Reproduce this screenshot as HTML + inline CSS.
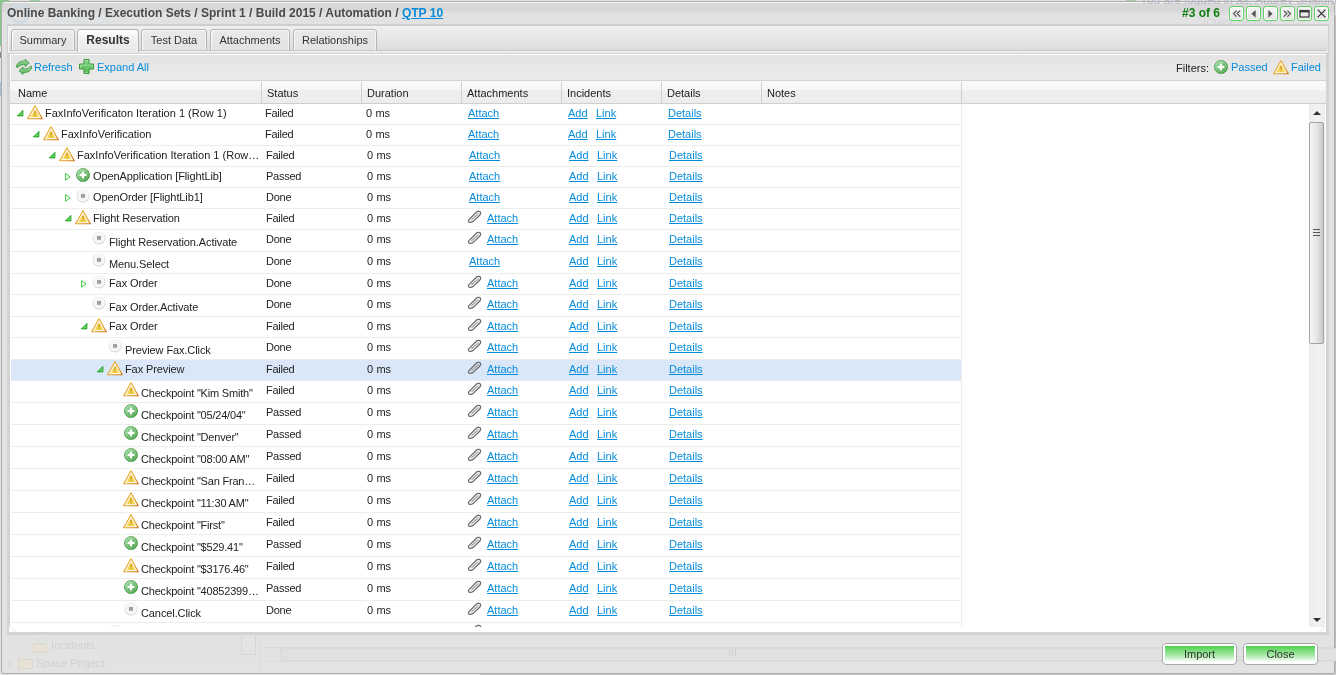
<!DOCTYPE html>
<html><head><meta charset="utf-8">
<style>
*{margin:0;padding:0;box-sizing:border-box}
html,body{width:1336px;height:675px;overflow:hidden;background:#e4e4e4;font-family:"Liberation Sans",sans-serif;font-size:11px;color:#222}
.a{position:absolute}
.ic{display:block}
.t{position:absolute;white-space:nowrap;line-height:13px;font-size:11px;color:#222}
.lk{color:#068cdc;text-decoration:underline}
#dlg{position:absolute;left:1px;top:1px;width:1334px;height:673px;border:1px solid #adadad;border-radius:4px 4px 2px 2px;background:linear-gradient(#f4f4f4 0,#f4f4f4 1px,#d8d8d8 1px,#d7d7d7 8px,#e2e2e2 12px,#e3e3e3 100%)}
#title{position:absolute;left:7px;top:6px;font-weight:bold;font-size:12px;color:#4b4b4b;line-height:14px;white-space:nowrap}
#title u{color:#068cdc}
#nav{position:absolute;left:1182px;top:6px;font-weight:bold;font-size:12px;color:#118011;line-height:14px}
.nb{position:absolute;top:6px;width:15px;height:15px;border:1px solid #5fd35f;border-radius:3px;background:linear-gradient(#f6f6f6,#e2e2e2);box-shadow:inset 0 0 0 1px #fff}
.nb svg{position:absolute;left:0;top:0}
#op{position:absolute;left:7px;top:24px;width:1322px;height:611px;border:1px solid #cfcfcf;border-top:2px solid #cecece;background:linear-gradient(#f0f0f0 0,#dcdcdc 24px,#ececec 25px);box-shadow:inset 1px 0 0 #f7f7f7}
.tab{position:absolute;top:29px;height:22px;border:1px solid #b3b3b3;border-radius:3px 3px 0 0;background:linear-gradient(#e9e9e9,#e3e3e3);box-shadow:inset 1px 1px 0 #fbfbfb,inset -1px 0 0 #f4f4f4;line-height:20px;text-align:center;font-size:11px;color:#333}
.tab span{position:relative;top:0px}
.tab.act{background:linear-gradient(#ffffff,#eeeeee 45%,#e9e9e9);height:23px;border-bottom:none;font-weight:bold;font-size:12px;color:#333;z-index:2}
#tline{position:absolute;left:9px;top:50px;width:1317px;height:1px;background:#c9c9c9}
#ip{position:absolute;left:7px;top:53px;width:1322px;height:582px;border-left:3px solid #d3d3d3;border-right:3px solid #d3d3d3;border-bottom:3px solid #d3d3d3;border-top:1px solid #d0d0d0;background:#fff}
#tbar{position:absolute;left:10px;top:54px;width:1316px;height:27px;background:linear-gradient(#e3e3e3,#ebebeb);border-bottom:1px solid #d2d2d2;border-top:1px solid #ffffff;border-left:1px solid #fff}
#hdr{position:absolute;left:10px;top:81px;width:1316px;height:23px;background:linear-gradient(#f9f9f9 0,#f7f7f7 40%,#eeeff1 40%,#ebecee 100%);border-bottom:1px solid #cfcfcf}
.hs{position:absolute;top:82px;width:1px;height:21px;background:#cfcfcf}
.row{position:absolute;left:11px;width:950px;border-bottom:1px solid #ededed;box-sizing:content-box}
.row.sel{background:#d9e7f8}
#sb{position:absolute;left:1309px;top:104px;width:17px;height:523px;background:linear-gradient(90deg,#ececec,#f2f2f2 60%,#eeeeee);border-right:1px solid #fff}
.btn{position:absolute;top:643px;height:22px;border:1px solid #a9a9a9;border-radius:4px;background:#fff;padding:2px}
.btn div{width:100%;height:100%;background:linear-gradient(#4cd24c,#b5ecb5 65%,#ffffff);text-align:center;line-height:17px;font-size:11px;color:#333}
#root{position:absolute;left:0;top:0;width:1336px;height:675px;will-change:transform}
</style></head><body><div id="root">
<div class="a" style="left:0;top:0;width:2px;height:46px;background:#86c886"></div><div class="a" style="left:0;top:0;width:9px;height:2px;background:#86c886"></div><div class="a" style="left:30px;top:0;width:10px;height:1px;background:#9ad09a"></div><div class="a" style="left:0;top:52px;width:1px;height:6px;background:#888"></div><div class="a" style="left:0;top:82px;width:1px;height:14px;background:#a8c0d8"></div><div class="a" style="left:1126px;top:0;width:10px;height:2px;background:#a6d3a6"></div>
<svg width="0" height="0" style="position:absolute">
<defs>
<linearGradient id="gp" x1="0.2" y1="0.1" x2="0.8" y2="0.9"><stop offset="0" stop-color="#9ad89a"/><stop offset="1" stop-color="#3d9a3d"/></linearGradient>
<linearGradient id="gw" x1="0" y1="0" x2="1" y2="1"><stop offset="0" stop-color="#f0b53a"/><stop offset="0.6" stop-color="#e5a12a"/><stop offset="1" stop-color="#cf7410"/></linearGradient>
<symbol id="warn" viewBox="0 0 16 15"><path d="M8 0.7 L15.3 13.7 H0.7 Z" fill="#fffdf6" stroke="url(#gw)" stroke-width="1.15" stroke-linejoin="round"/><path d="M8 4.3 L12.4 12.1 H3.6Z" fill="#f5d24a"/><path d="M8 4.3 L12.4 12.1 H3.6Z" fill="none" stroke="#f9e59a" stroke-width="0.5"/><rect x="7.35" y="5.8" width="1.3" height="3.6" rx="0.5" fill="#cf9a2c"/><rect x="7.35" y="10.2" width="1.3" height="1.1" fill="#cf9a2c"/></symbol>
<symbol id="pass" viewBox="0 0 14 14"><circle cx="7" cy="7" r="6.6" fill="url(#gp)"/><circle cx="7" cy="7" r="6.6" fill="none" stroke="#4b9e4b" stroke-width="0.7"/><circle cx="7" cy="7" r="5.1" fill="none" stroke="#c4e8c4" stroke-width="0.6" opacity="0.8"/><path d="M5.8 3.5h2.4v2.3h2.3v2.4H8.2v2.3H5.8V8.2H3.5V5.8h2.3z" fill="#fff"/></symbol>
<symbol id="done" viewBox="0 0 14 14"><defs><linearGradient id="gd" x1="0" y1="0" x2="0" y2="1"><stop offset="0" stop-color="#f0f0f0"/><stop offset="1" stop-color="#c9c9c9"/></linearGradient></defs><circle cx="7" cy="7" r="6.5" fill="url(#gd)"/><circle cx="7" cy="7" r="5.6" fill="#fdfdfd"/><circle cx="7" cy="7" r="4.4" fill="#f3f3f3"/><rect x="5" y="5" width="4" height="3.8" fill="#a0a0a0"/></symbol>
<symbol id="exp" viewBox="0 0 7 7"><path d="M5.9 0.4 V5.9 H0.4 Z" fill="#5bd65b" stroke="#1f9b1f" stroke-width="0.9" stroke-linejoin="round"/></symbol>
<symbol id="col" viewBox="0 0 7 8"><path d="M0.6 0.6 V7.2 L5.1 3.9 Z" fill="#fff" stroke="#3ac83a" stroke-width="1" stroke-linejoin="round"/></symbol>
<symbol id="clip" viewBox="0 0 15 14"><path d="M3.2 12.4 C1.6 12.4 0.9 10.8 2 9.6 L9.6 2 C10.8 0.9 13.2 1.5 13.6 2.6 C14 3.8 13.2 4.6 12.6 5.2 L6 11.6 C5.2 12.3 4.2 12.4 3.2 12.4Z" fill="none" stroke="#6a6a6a" stroke-width="1.3"/><path d="M4.4 10 L11.6 3.4" stroke="#9a9a9a" stroke-width="1.1"/></symbol>
</defs></svg>

<div class="a" style="left:1335px;top:14px;width:1px;height:661px;background:#bcbcbc"></div><div class="a" style="left:480px;top:674px;width:856px;height:1px;background:#c4c4c4"></div>
<div id="dlg"></div>
<div class="a" style="left:1100px;top:0;width:236px;height:5px;overflow:hidden"><div class="t" style="left:40px;top:-6px;font-size:12px;line-height:12px;color:#bdb7c6">You are logged in as: Audrey Shalom</div></div>
<svg class="a" style="left:0;top:0" width="160" height="26" viewBox="0 0 160 26"><circle cx="19.5" cy="14" r="8.5" fill="none" stroke="#d3dce2" stroke-width="3.5"/><circle cx="29" cy="14" r="10" fill="none" stroke="#d9e0d9" stroke-width="2" stroke-dasharray="20 40" transform="rotate(-60 29 14)"/><text x="45" y="23" font-family="Liberation Sans" font-size="18" fill="#d9e0e4">nterprise</text></svg>
<div class="a" style="left:1204px;top:14px;width:132px;height:11px;border-left:1px solid #d9d9d9;border-top:1px solid #dcdcdc"></div>
<div class="t" style="left:1206px;top:16px;color:#d4d4d8;font-size:11px">Quick Search</div>
<div id="title">Online Banking / Execution Sets / Sprint 1 / Build 2015 / Automation / <u>QTP 10</u></div>
<div id="nav">#3 of 6</div>
<div class="nb" style="left:1229px"><svg width="13" height="13" viewBox="0 0 13 13"><path d="M6.6 3.6 L3.6 6.6 L6.6 9.6 M10.2 3.6 L7.2 6.6 L10.2 9.6" fill="none" stroke="#555" stroke-width="1.3"/></svg></div>
<div class="nb" style="left:1246px"><svg width="13" height="13" viewBox="0 0 13 13"><path d="M8.6 3 V10.4 L4.4 6.7Z" fill="#505050"/></svg></div>
<div class="nb" style="left:1263px"><svg width="13" height="13" viewBox="0 0 13 13"><path d="M4.4 3 V10.4 L8.6 6.7Z" fill="#505050"/></svg></div>
<div class="nb" style="left:1280px"><svg width="13" height="13" viewBox="0 0 13 13"><path d="M2.8 3.6 L5.8 6.6 L2.8 9.6 M6.4 3.6 L9.4 6.6 L6.4 9.6" fill="none" stroke="#555" stroke-width="1.3"/></svg></div>
<div class="nb" style="left:1297px"><svg width="13" height="13" viewBox="0 0 13 13"><rect x="2" y="3.5" width="9" height="6.5" fill="none" stroke="#3a3a3a" stroke-width="1.2"/><rect x="1.5" y="3" width="10" height="2.4" fill="#3a3a3a"/></svg></div>
<div class="nb" style="left:1314px"><svg width="13" height="13" viewBox="0 0 13 13"><path d="M2.6 2.6 L10.4 10.4 M10.4 2.6 L2.6 10.4" stroke="#333" stroke-width="1.3"/></svg></div>
<div id="op"></div>
<div class="tab" style="left:11px;width:64px"><span>Summary</span></div>
<div class="tab act" style="left:77px;width:62px"><span>Results</span></div>
<div class="tab" style="left:141px;width:66px"><span>Test Data</span></div>
<div class="tab" style="left:210px;width:80px"><span>Attachments</span></div>
<div class="tab" style="left:293px;width:84px"><span>Relationships</span></div>
<div id="tline"></div>

<div id="ip"></div>
<div id="tbar"></div>
<div class="a" style="left:16px;top:59px"><svg width="16" height="16" viewBox="0 0 16 16"><defs><linearGradient id="gr" x1="0" y1="0" x2="0" y2="1"><stop offset="0" stop-color="#a4dba4"/><stop offset="1" stop-color="#57b457"/></linearGradient></defs><path d="M0.3 8 C0.8 4 4 1.9 9.2 1.9 L9.2 0.2 L13.2 3.9 L9.2 7.6 L9.2 5.6 C5.5 5.6 3 6.5 1.8 8.6 Z" fill="url(#gr)" stroke="#3b8f3b" stroke-width="0.8" stroke-linejoin="round"/><path d="M15.9 7.6 C15.4 11.6 12.2 13.7 7 13.7 L7 15.4 L3 11.7 L7 8 L7 10 C10.7 10 13.2 9.1 14.4 7 Z" fill="url(#gr)" stroke="#3b8f3b" stroke-width="0.8" stroke-linejoin="round"/></svg></div>
<div class="t lk" style="left:34px;top:61px;text-decoration:none">Refresh</div>
<div class="a" style="left:79px;top:59px"><svg width="15" height="15" viewBox="0 0 15 15"><defs><linearGradient id="gpl" x1="0" y1="0" x2="0" y2="1"><stop offset="0" stop-color="#8ad88a"/><stop offset="1" stop-color="#4eb64e"/></linearGradient></defs><path d="M5 0.5 H10 V5 H14.5 V10 H10 V14.5 H5 V10 H0.5 V5 H5Z" fill="url(#gpl)" stroke="#3c963c" stroke-width="1"/><path d="M6.2 1.6 H8.8 M1.6 6.2 V8.8 M13.4 6.2 V8.8 M6.2 13.4 H8.8" stroke="#b8ecb8" stroke-width="0.8"/><path d="M2 6.1 H13" stroke="#c8f0c8" stroke-width="0.7" opacity="0.7"/><path d="M7.5 2 V13" stroke="#6cc86c" stroke-width="0.8" opacity="0.5"/></svg></div>
<div class="t lk" style="left:97px;top:61px;text-decoration:none">Expand All</div>
<div class="t" style="left:1176px;top:62px">Filters:</div>
<div class="a" style="left:1214px;top:60px"><svg width="14" height="14" viewBox="0 0 14 14"><use href="#pass"/></svg></div>
<div class="t lk" style="left:1231px;top:61px;text-decoration:none">Passed</div>
<div class="a" style="left:1273px;top:60px"><svg width="16" height="15" viewBox="0 0 16 15"><use href="#warn"/></svg></div>
<div class="t lk" style="left:1291px;top:61px;text-decoration:none">Failed</div>

<div id="hdr"></div>
<div class="hs" style="left:261px"></div>
<div class="hs" style="left:361px"></div>
<div class="hs" style="left:461px"></div>
<div class="hs" style="left:561px"></div>
<div class="hs" style="left:661px"></div>
<div class="hs" style="left:761px"></div>
<div class="a" style="left:961px;top:104px;width:1px;height:523px;background:#ededed"></div>
<div class="hs" style="left:961px"></div>
<div class="t" style="left:18px;top:87px">Name</div>
<div class="t" style="left:267px;top:87px">Status</div>
<div class="t" style="left:367px;top:87px">Duration</div>
<div class="t" style="left:467px;top:87px">Attachments</div>
<div class="t" style="left:567px;top:87px">Incidents</div>
<div class="t" style="left:667px;top:87px">Details</div>
<div class="t" style="left:767px;top:87px">Notes</div>

<div id="grid" style="position:absolute;left:0;top:0;width:1308px;height:627px;overflow:hidden">
<div class="row" style="top:104px;height:20px"></div><div class="a" style="left:17px;top:110px"><svg class="ic" width="7" height="7" viewBox="0 0 7 7"><use href="#exp"/></svg></div><div class="a" style="left:27px;top:105px"><svg class="ic" width="16" height="15" viewBox="0 0 16 15"><use href="#warn"/></svg></div><div class="t" style="left:45px;top:107px;letter-spacing:0px">FaxInfoVerificaton Iteration 1 (Row 1)</div><div class="t" style="left:265px;top:107px;letter-spacing:-0.25px">Failed</div><div class="t" style="left:366px;top:107px;letter-spacing:-0.3px;word-spacing:1px">0 ms</div><div class="t lk" style="left:468px;top:107px">Attach</div><div class="t lk" style="left:568px;top:107px">Add</div><div class="t lk" style="left:596px;top:107px">Link</div><div class="t lk" style="left:668px;top:107px">Details</div>
<div class="row" style="top:125px;height:20px"></div><div class="a" style="left:33px;top:131px"><svg class="ic" width="7" height="7" viewBox="0 0 7 7"><use href="#exp"/></svg></div><div class="a" style="left:43px;top:126px"><svg class="ic" width="16" height="15" viewBox="0 0 16 15"><use href="#warn"/></svg></div><div class="t" style="left:61px;top:128px;letter-spacing:0px">FaxInfoVerification</div><div class="t" style="left:265px;top:128px;letter-spacing:-0.25px">Failed</div><div class="t" style="left:366px;top:128px;letter-spacing:-0.3px;word-spacing:1px">0 ms</div><div class="t lk" style="left:468px;top:128px">Attach</div><div class="t lk" style="left:568px;top:128px">Add</div><div class="t lk" style="left:596px;top:128px">Link</div><div class="t lk" style="left:668px;top:128px">Details</div>
<div class="row" style="top:146px;height:20px"></div><div class="a" style="left:49px;top:152px"><svg class="ic" width="7" height="7" viewBox="0 0 7 7"><use href="#exp"/></svg></div><div class="a" style="left:59px;top:147px"><svg class="ic" width="16" height="15" viewBox="0 0 16 15"><use href="#warn"/></svg></div><div class="t" style="left:77px;top:149px;letter-spacing:0px">FaxInfoVerification Iteration 1 (Row…</div><div class="t" style="left:266px;top:149px;letter-spacing:-0.25px">Failed</div><div class="t" style="left:367px;top:149px;letter-spacing:-0.3px;word-spacing:1px">0 ms</div><div class="t lk" style="left:469px;top:149px">Attach</div><div class="t lk" style="left:569px;top:149px">Add</div><div class="t lk" style="left:597px;top:149px">Link</div><div class="t lk" style="left:669px;top:149px">Details</div>
<div class="row" style="top:167px;height:20px"></div><div class="a" style="left:65px;top:173px"><svg class="ic" width="7" height="8" viewBox="0 0 7 8"><use href="#col"/></svg></div><div class="a" style="left:76px;top:168px"><svg class="ic" width="14" height="14" viewBox="0 0 14 14"><use href="#pass"/></svg></div><div class="t" style="left:93px;top:170px;letter-spacing:-0.1px">OpenApplication [FlightLib]</div><div class="t" style="left:266px;top:170px;letter-spacing:-0.25px">Passed</div><div class="t" style="left:367px;top:170px;letter-spacing:-0.3px;word-spacing:1px">0 ms</div><div class="t lk" style="left:469px;top:170px">Attach</div><div class="t lk" style="left:569px;top:170px">Add</div><div class="t lk" style="left:597px;top:170px">Link</div><div class="t lk" style="left:669px;top:170px">Details</div>
<div class="row" style="top:188px;height:20px"></div><div class="a" style="left:65px;top:194px"><svg class="ic" width="7" height="8" viewBox="0 0 7 8"><use href="#col"/></svg></div><div class="a" style="left:76px;top:189px"><svg class="ic" width="14" height="14" viewBox="0 0 14 14"><use href="#done"/></svg></div><div class="t" style="left:93px;top:191px;letter-spacing:-0.1px">OpenOrder [FlightLib1]</div><div class="t" style="left:266px;top:191px;letter-spacing:-0.25px">Done</div><div class="t" style="left:367px;top:191px;letter-spacing:-0.3px;word-spacing:1px">0 ms</div><div class="t lk" style="left:469px;top:191px">Attach</div><div class="t lk" style="left:569px;top:191px">Add</div><div class="t lk" style="left:597px;top:191px">Link</div><div class="t lk" style="left:669px;top:191px">Details</div>
<div class="row" style="top:209px;height:20px"></div><div class="a" style="left:65px;top:215px"><svg class="ic" width="7" height="7" viewBox="0 0 7 7"><use href="#exp"/></svg></div><div class="a" style="left:75px;top:210px"><svg class="ic" width="16" height="15" viewBox="0 0 16 15"><use href="#warn"/></svg></div><div class="t" style="left:93px;top:212px;letter-spacing:-0.1px">Flight Reservation</div><div class="t" style="left:266px;top:212px;letter-spacing:-0.25px">Failed</div><div class="t" style="left:367px;top:212px;letter-spacing:-0.3px;word-spacing:1px">0 ms</div><div class="a" style="left:467px;top:210px"><svg class="ic" width="15" height="14" viewBox="0 0 15 14"><use href="#clip"/></svg></div><div class="t lk" style="left:487px;top:212px">Attach</div><div class="t lk" style="left:569px;top:212px">Add</div><div class="t lk" style="left:597px;top:212px">Link</div><div class="t lk" style="left:669px;top:212px">Details</div>
<div class="row" style="top:230px;height:21px"></div><div class="a" style="left:92px;top:231px"><svg class="ic" width="14" height="14" viewBox="0 0 14 14"><use href="#done"/></svg></div><div class="t" style="left:109px;top:236px;letter-spacing:-0.1px">Flight Reservation.Activate</div><div class="t" style="left:266px;top:233px;letter-spacing:-0.25px">Done</div><div class="t" style="left:367px;top:233px;letter-spacing:-0.3px;word-spacing:1px">0 ms</div><div class="a" style="left:467px;top:231px"><svg class="ic" width="15" height="14" viewBox="0 0 15 14"><use href="#clip"/></svg></div><div class="t lk" style="left:487px;top:233px">Attach</div><div class="t lk" style="left:569px;top:233px">Add</div><div class="t lk" style="left:597px;top:233px">Link</div><div class="t lk" style="left:669px;top:233px">Details</div>
<div class="row" style="top:252px;height:21px"></div><div class="a" style="left:92px;top:253px"><svg class="ic" width="14" height="14" viewBox="0 0 14 14"><use href="#done"/></svg></div><div class="t" style="left:109px;top:258px;letter-spacing:-0.1px">Menu.Select</div><div class="t" style="left:266px;top:255px;letter-spacing:-0.25px">Done</div><div class="t" style="left:367px;top:255px;letter-spacing:-0.3px;word-spacing:1px">0 ms</div><div class="t lk" style="left:469px;top:255px">Attach</div><div class="t lk" style="left:569px;top:255px">Add</div><div class="t lk" style="left:597px;top:255px">Link</div><div class="t lk" style="left:669px;top:255px">Details</div>
<div class="row" style="top:274px;height:20px"></div><div class="a" style="left:81px;top:280px"><svg class="ic" width="7" height="8" viewBox="0 0 7 8"><use href="#col"/></svg></div><div class="a" style="left:92px;top:275px"><svg class="ic" width="14" height="14" viewBox="0 0 14 14"><use href="#done"/></svg></div><div class="t" style="left:109px;top:277px;letter-spacing:-0.1px">Fax Order</div><div class="t" style="left:266px;top:277px;letter-spacing:-0.25px">Done</div><div class="t" style="left:367px;top:277px;letter-spacing:-0.3px;word-spacing:1px">0 ms</div><div class="a" style="left:467px;top:275px"><svg class="ic" width="15" height="14" viewBox="0 0 15 14"><use href="#clip"/></svg></div><div class="t lk" style="left:487px;top:277px">Attach</div><div class="t lk" style="left:569px;top:277px">Add</div><div class="t lk" style="left:597px;top:277px">Link</div><div class="t lk" style="left:669px;top:277px">Details</div>
<div class="row" style="top:295px;height:21px"></div><div class="a" style="left:92px;top:296px"><svg class="ic" width="14" height="14" viewBox="0 0 14 14"><use href="#done"/></svg></div><div class="t" style="left:109px;top:301px;letter-spacing:-0.1px">Fax Order.Activate</div><div class="t" style="left:266px;top:298px;letter-spacing:-0.25px">Done</div><div class="t" style="left:367px;top:298px;letter-spacing:-0.3px;word-spacing:1px">0 ms</div><div class="a" style="left:467px;top:296px"><svg class="ic" width="15" height="14" viewBox="0 0 15 14"><use href="#clip"/></svg></div><div class="t lk" style="left:487px;top:298px">Attach</div><div class="t lk" style="left:569px;top:298px">Add</div><div class="t lk" style="left:597px;top:298px">Link</div><div class="t lk" style="left:669px;top:298px">Details</div>
<div class="row" style="top:317px;height:20px"></div><div class="a" style="left:81px;top:323px"><svg class="ic" width="7" height="7" viewBox="0 0 7 7"><use href="#exp"/></svg></div><div class="a" style="left:91px;top:318px"><svg class="ic" width="16" height="15" viewBox="0 0 16 15"><use href="#warn"/></svg></div><div class="t" style="left:109px;top:320px;letter-spacing:-0.1px">Fax Order</div><div class="t" style="left:266px;top:320px;letter-spacing:-0.25px">Failed</div><div class="t" style="left:367px;top:320px;letter-spacing:-0.3px;word-spacing:1px">0 ms</div><div class="a" style="left:467px;top:318px"><svg class="ic" width="15" height="14" viewBox="0 0 15 14"><use href="#clip"/></svg></div><div class="t lk" style="left:487px;top:320px">Attach</div><div class="t lk" style="left:569px;top:320px">Add</div><div class="t lk" style="left:597px;top:320px">Link</div><div class="t lk" style="left:669px;top:320px">Details</div>
<div class="row" style="top:338px;height:21px"></div><div class="a" style="left:108px;top:339px"><svg class="ic" width="14" height="14" viewBox="0 0 14 14"><use href="#done"/></svg></div><div class="t" style="left:125px;top:344px;letter-spacing:-0.1px">Preview Fax.Click</div><div class="t" style="left:266px;top:341px;letter-spacing:-0.25px">Done</div><div class="t" style="left:367px;top:341px;letter-spacing:-0.3px;word-spacing:1px">0 ms</div><div class="a" style="left:467px;top:339px"><svg class="ic" width="15" height="14" viewBox="0 0 15 14"><use href="#clip"/></svg></div><div class="t lk" style="left:487px;top:341px">Attach</div><div class="t lk" style="left:569px;top:341px">Add</div><div class="t lk" style="left:597px;top:341px">Link</div><div class="t lk" style="left:669px;top:341px">Details</div>
<div class="row sel" style="top:360px;height:20px"></div><div class="a" style="left:97px;top:366px"><svg class="ic" width="7" height="7" viewBox="0 0 7 7"><use href="#exp"/></svg></div><div class="a" style="left:107px;top:361px"><svg class="ic" width="16" height="15" viewBox="0 0 16 15"><use href="#warn"/></svg></div><div class="t" style="left:125px;top:363px;letter-spacing:-0.1px">Fax Preview</div><div class="t" style="left:266px;top:363px;letter-spacing:-0.25px">Failed</div><div class="t" style="left:367px;top:363px;letter-spacing:-0.3px;word-spacing:1px">0 ms</div><div class="a" style="left:467px;top:361px"><svg class="ic" width="15" height="14" viewBox="0 0 15 14"><use href="#clip"/></svg></div><div class="t lk" style="left:487px;top:363px">Attach</div><div class="t lk" style="left:569px;top:363px">Add</div><div class="t lk" style="left:597px;top:363px">Link</div><div class="t lk" style="left:669px;top:363px">Details</div>
<div class="row" style="top:381px;height:21px"></div><div class="a" style="left:123px;top:382px"><svg class="ic" width="16" height="15" viewBox="0 0 16 15"><use href="#warn"/></svg></div><div class="t" style="left:141px;top:387px;letter-spacing:-0.2px">Checkpoint &quot;Kim Smith&quot;</div><div class="t" style="left:266px;top:384px;letter-spacing:-0.25px">Failed</div><div class="t" style="left:367px;top:384px;letter-spacing:-0.3px;word-spacing:1px">0 ms</div><div class="a" style="left:467px;top:382px"><svg class="ic" width="15" height="14" viewBox="0 0 15 14"><use href="#clip"/></svg></div><div class="t lk" style="left:487px;top:384px">Attach</div><div class="t lk" style="left:569px;top:384px">Add</div><div class="t lk" style="left:597px;top:384px">Link</div><div class="t lk" style="left:669px;top:384px">Details</div>
<div class="row" style="top:403px;height:21px"></div><div class="a" style="left:124px;top:404px"><svg class="ic" width="14" height="14" viewBox="0 0 14 14"><use href="#pass"/></svg></div><div class="t" style="left:141px;top:409px;letter-spacing:-0.2px">Checkpoint &quot;05/24/04&quot;</div><div class="t" style="left:266px;top:406px;letter-spacing:-0.25px">Passed</div><div class="t" style="left:367px;top:406px;letter-spacing:-0.3px;word-spacing:1px">0 ms</div><div class="a" style="left:467px;top:404px"><svg class="ic" width="15" height="14" viewBox="0 0 15 14"><use href="#clip"/></svg></div><div class="t lk" style="left:487px;top:406px">Attach</div><div class="t lk" style="left:569px;top:406px">Add</div><div class="t lk" style="left:597px;top:406px">Link</div><div class="t lk" style="left:669px;top:406px">Details</div>
<div class="row" style="top:425px;height:21px"></div><div class="a" style="left:124px;top:426px"><svg class="ic" width="14" height="14" viewBox="0 0 14 14"><use href="#pass"/></svg></div><div class="t" style="left:141px;top:431px;letter-spacing:-0.2px">Checkpoint &quot;Denver&quot;</div><div class="t" style="left:266px;top:428px;letter-spacing:-0.25px">Passed</div><div class="t" style="left:367px;top:428px;letter-spacing:-0.3px;word-spacing:1px">0 ms</div><div class="a" style="left:467px;top:426px"><svg class="ic" width="15" height="14" viewBox="0 0 15 14"><use href="#clip"/></svg></div><div class="t lk" style="left:487px;top:428px">Attach</div><div class="t lk" style="left:569px;top:428px">Add</div><div class="t lk" style="left:597px;top:428px">Link</div><div class="t lk" style="left:669px;top:428px">Details</div>
<div class="row" style="top:447px;height:21px"></div><div class="a" style="left:124px;top:448px"><svg class="ic" width="14" height="14" viewBox="0 0 14 14"><use href="#pass"/></svg></div><div class="t" style="left:141px;top:453px;letter-spacing:-0.2px">Checkpoint &quot;08:00 AM&quot;</div><div class="t" style="left:266px;top:450px;letter-spacing:-0.25px">Passed</div><div class="t" style="left:367px;top:450px;letter-spacing:-0.3px;word-spacing:1px">0 ms</div><div class="a" style="left:467px;top:448px"><svg class="ic" width="15" height="14" viewBox="0 0 15 14"><use href="#clip"/></svg></div><div class="t lk" style="left:487px;top:450px">Attach</div><div class="t lk" style="left:569px;top:450px">Add</div><div class="t lk" style="left:597px;top:450px">Link</div><div class="t lk" style="left:669px;top:450px">Details</div>
<div class="row" style="top:469px;height:21px"></div><div class="a" style="left:123px;top:470px"><svg class="ic" width="16" height="15" viewBox="0 0 16 15"><use href="#warn"/></svg></div><div class="t" style="left:141px;top:475px;letter-spacing:-0.2px">Checkpoint &quot;San Fran…</div><div class="t" style="left:266px;top:472px;letter-spacing:-0.25px">Failed</div><div class="t" style="left:367px;top:472px;letter-spacing:-0.3px;word-spacing:1px">0 ms</div><div class="a" style="left:467px;top:470px"><svg class="ic" width="15" height="14" viewBox="0 0 15 14"><use href="#clip"/></svg></div><div class="t lk" style="left:487px;top:472px">Attach</div><div class="t lk" style="left:569px;top:472px">Add</div><div class="t lk" style="left:597px;top:472px">Link</div><div class="t lk" style="left:669px;top:472px">Details</div>
<div class="row" style="top:491px;height:21px"></div><div class="a" style="left:123px;top:492px"><svg class="ic" width="16" height="15" viewBox="0 0 16 15"><use href="#warn"/></svg></div><div class="t" style="left:141px;top:497px;letter-spacing:-0.2px">Checkpoint &quot;11:30 AM&quot;</div><div class="t" style="left:266px;top:494px;letter-spacing:-0.25px">Failed</div><div class="t" style="left:367px;top:494px;letter-spacing:-0.3px;word-spacing:1px">0 ms</div><div class="a" style="left:467px;top:492px"><svg class="ic" width="15" height="14" viewBox="0 0 15 14"><use href="#clip"/></svg></div><div class="t lk" style="left:487px;top:494px">Attach</div><div class="t lk" style="left:569px;top:494px">Add</div><div class="t lk" style="left:597px;top:494px">Link</div><div class="t lk" style="left:669px;top:494px">Details</div>
<div class="row" style="top:513px;height:21px"></div><div class="a" style="left:123px;top:514px"><svg class="ic" width="16" height="15" viewBox="0 0 16 15"><use href="#warn"/></svg></div><div class="t" style="left:141px;top:519px;letter-spacing:-0.2px">Checkpoint &quot;First&quot;</div><div class="t" style="left:266px;top:516px;letter-spacing:-0.25px">Failed</div><div class="t" style="left:367px;top:516px;letter-spacing:-0.3px;word-spacing:1px">0 ms</div><div class="a" style="left:467px;top:514px"><svg class="ic" width="15" height="14" viewBox="0 0 15 14"><use href="#clip"/></svg></div><div class="t lk" style="left:487px;top:516px">Attach</div><div class="t lk" style="left:569px;top:516px">Add</div><div class="t lk" style="left:597px;top:516px">Link</div><div class="t lk" style="left:669px;top:516px">Details</div>
<div class="row" style="top:535px;height:21px"></div><div class="a" style="left:124px;top:536px"><svg class="ic" width="14" height="14" viewBox="0 0 14 14"><use href="#pass"/></svg></div><div class="t" style="left:141px;top:541px;letter-spacing:-0.2px">Checkpoint &quot;$529.41&quot;</div><div class="t" style="left:266px;top:538px;letter-spacing:-0.25px">Passed</div><div class="t" style="left:367px;top:538px;letter-spacing:-0.3px;word-spacing:1px">0 ms</div><div class="a" style="left:467px;top:536px"><svg class="ic" width="15" height="14" viewBox="0 0 15 14"><use href="#clip"/></svg></div><div class="t lk" style="left:487px;top:538px">Attach</div><div class="t lk" style="left:569px;top:538px">Add</div><div class="t lk" style="left:597px;top:538px">Link</div><div class="t lk" style="left:669px;top:538px">Details</div>
<div class="row" style="top:557px;height:21px"></div><div class="a" style="left:123px;top:558px"><svg class="ic" width="16" height="15" viewBox="0 0 16 15"><use href="#warn"/></svg></div><div class="t" style="left:141px;top:563px;letter-spacing:-0.2px">Checkpoint &quot;$3176.46&quot;</div><div class="t" style="left:266px;top:560px;letter-spacing:-0.25px">Failed</div><div class="t" style="left:367px;top:560px;letter-spacing:-0.3px;word-spacing:1px">0 ms</div><div class="a" style="left:467px;top:558px"><svg class="ic" width="15" height="14" viewBox="0 0 15 14"><use href="#clip"/></svg></div><div class="t lk" style="left:487px;top:560px">Attach</div><div class="t lk" style="left:569px;top:560px">Add</div><div class="t lk" style="left:597px;top:560px">Link</div><div class="t lk" style="left:669px;top:560px">Details</div>
<div class="row" style="top:579px;height:21px"></div><div class="a" style="left:124px;top:580px"><svg class="ic" width="14" height="14" viewBox="0 0 14 14"><use href="#pass"/></svg></div><div class="t" style="left:141px;top:585px;letter-spacing:-0.2px">Checkpoint &quot;40852399…</div><div class="t" style="left:266px;top:582px;letter-spacing:-0.25px">Passed</div><div class="t" style="left:367px;top:582px;letter-spacing:-0.3px;word-spacing:1px">0 ms</div><div class="a" style="left:467px;top:580px"><svg class="ic" width="15" height="14" viewBox="0 0 15 14"><use href="#clip"/></svg></div><div class="t lk" style="left:487px;top:582px">Attach</div><div class="t lk" style="left:569px;top:582px">Add</div><div class="t lk" style="left:597px;top:582px">Link</div><div class="t lk" style="left:669px;top:582px">Details</div>
<div class="row" style="top:601px;height:21px"></div><div class="a" style="left:124px;top:602px"><svg class="ic" width="14" height="14" viewBox="0 0 14 14"><use href="#done"/></svg></div><div class="t" style="left:141px;top:607px;letter-spacing:-0.1px">Cancel.Click</div><div class="t" style="left:266px;top:604px;letter-spacing:-0.25px">Done</div><div class="t" style="left:367px;top:604px;letter-spacing:-0.3px;word-spacing:1px">0 ms</div><div class="a" style="left:467px;top:602px"><svg class="ic" width="15" height="14" viewBox="0 0 15 14"><use href="#clip"/></svg></div><div class="t lk" style="left:487px;top:604px">Attach</div><div class="t lk" style="left:569px;top:604px">Add</div><div class="t lk" style="left:597px;top:604px">Link</div><div class="t lk" style="left:669px;top:604px">Details</div>
<div class="row" style="top:623px;height:21px"></div>
<div class="a" style="left:108px;top:624px"><svg class="ic" width="14" height="14" viewBox="0 0 14 14"><use href="#done"/></svg></div>
<div class="a" style="left:467px;top:624px"><svg class="ic" width="15" height="14" viewBox="0 0 15 14"><use href="#clip"/></svg></div>
</div>
<div id="sb"></div>
<div class="a" style="left:1313px;top:111px;width:0;height:0;border-left:4px solid transparent;border-right:4px solid transparent;border-bottom:4px solid #333"></div>
<div class="a" style="left:1309px;top:122px;width:15px;height:222px;border:1px solid #a3a3a3;border-radius:2px;background:linear-gradient(90deg,#f6f6f6,#e4e4e4 55%,#c9c9c9)"></div>
<div class="a" style="left:1313px;top:229px;width:7px;height:7px;background:linear-gradient(#555 0,#555 1px,transparent 1px,transparent 3px,#555 3px,#555 4px,transparent 4px,transparent 6px,#555 6px,#555 7px)"></div>
<div class="a" style="left:1313px;top:618px;width:0;height:0;border-left:4px solid transparent;border-right:4px solid transparent;border-top:4px solid #333"></div>

<div class="t" style="left:51px;top:639px;color:#cfd0d6">Incidents</div>
<div class="a" style="left:33px;top:643px;width:14px;height:10px;border:1px solid #dcd7c8;background:#e6e2d6"></div>
<div class="a" style="left:38px;top:638px;width:9px;height:7px;border:1px dotted #cfe0cf"></div>
<div class="t" style="left:36px;top:657px;color:#cfd0d6">Space Project</div>
<div class="a" style="left:18px;top:659px;width:15px;height:10px;border:1px solid #dcd7c8;background:#e6e2d6;border-radius:1px"></div>
<div class="a" style="left:8px;top:661px;width:0;height:0;border-top:3px solid transparent;border-bottom:3px solid transparent;border-left:4px solid #d3e0d3"></div>
<div class="a" style="left:241px;top:635px;width:15px;height:20px;border:1px solid #d6d6d6;border-top:none"></div>
<div class="a" style="left:259px;top:635px;width:1px;height:37px;background:#dedede"></div>
<div class="a" style="left:260px;top:647px;width:1073px;height:1px;background:#dadada"></div>
<div class="a" style="left:260px;top:661px;width:1073px;height:1px;background:#dcdcdc"></div>
<div class="a" style="left:280px;top:648px;width:1060px;height:13px;border:1px solid #d8d8d8;border-radius:3px;background:#e0e0e0"></div>
<div class="a" style="left:729px;top:650px;width:7px;height:6px;background:linear-gradient(90deg,#cfcfcf 1px,transparent 1px,transparent 3px,#cfcfcf 3px,#cfcfcf 4px,transparent 4px,transparent 6px,#cfcfcf 6px)"></div>
<svg class="a" style="left:9px;top:626px" width="8" height="7" viewBox="0 0 8 7"><path d="M0 0 V6 H7Z" fill="#fff"/><path d="M1 0.5 L6.5 6" stroke="#d8d8d8" stroke-width="0.8"/></svg>
<svg class="a" style="left:1318px;top:626px" width="8" height="7" viewBox="0 0 8 7"><path d="M8 0 V6 H1Z" fill="#fff"/><path d="M7 0.5 L1.5 6" stroke="#d8d8d8" stroke-width="0.8"/></svg>
<div class="btn" style="left:1162px;width:75px"><div>Import</div></div>
<div class="btn" style="left:1243px;width:75px"><div>Close</div></div>
</div></body></html>
